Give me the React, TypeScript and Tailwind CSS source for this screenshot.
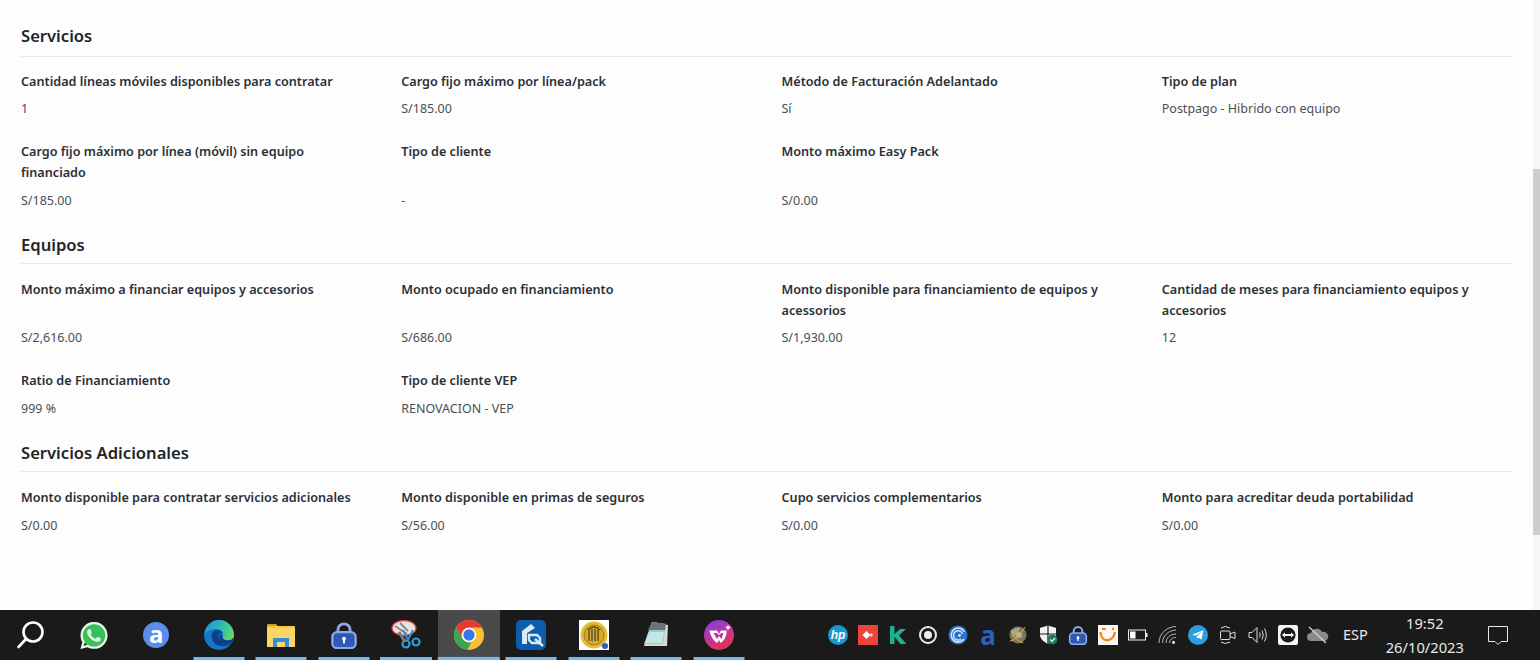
import { FaWhatsapp, FaTelegramPlane } from "react-icons/fa";

type Field = { label: string; value: string };

const servicios: Field[][] = [
  [
    { label: "Cantidad líneas móviles disponibles para contratar", value: "1" },
    { label: "Cargo fijo máximo por línea/pack", value: "S/185.00" },
    { label: "Método de Facturación Adelantado", value: "Sí" },
    { label: "Tipo de plan", value: "Postpago - Hibrido con equipo" },
  ],
  [
    { label: "Cargo fijo máximo por línea (móvil) sin equipo financiado", value: "S/185.00" },
    { label: "Tipo de cliente", value: "-" },
    { label: "Monto máximo Easy Pack", value: "S/0.00" },
  ],
];

const equipos: Field[][] = [
  [
    { label: "Monto máximo a financiar equipos y accesorios", value: "S/2,616.00" },
    { label: "Monto ocupado en financiamiento", value: "S/686.00" },
    { label: "Monto disponible para financiamiento de equipos y acessorios", value: "S/1,930.00" },
    { label: "Cantidad de meses para financiamiento equipos y accesorios", value: "12" },
  ],
  [
    { label: "Ratio de Financiamiento", value: "999 %" },
    { label: "Tipo de cliente VEP", value: "RENOVACION - VEP" },
  ],
];

const adicionales: Field[][] = [
  [
    { label: "Monto disponible para contratar servicios adicionales", value: "S/0.00" },
    { label: "Monto disponible en primas de seguros", value: "S/56.00" },
    { label: "Cupo servicios complementarios", value: "S/0.00" },
    { label: "Monto para acreditar deuda portabilidad", value: "S/0.00" },
  ],
];

function Section({ title, rows, first }: { title: string; rows: Field[][]; first?: boolean }) {
  return (
    <section className={first ? "" : "mt-[14.8px]"}>
      <h2 className={`border-b border-[#e6e8ea] text-[16.6px] leading-[24px] font-semibold text-[#212529] ${first ? "h-[33px]" : "h-[31px]"}`}>
        {title}
      </h2>
      {rows.map((row, i) => (
        <div key={i} className={`grid grid-cols-4 gap-x-[30px] ${i === 0 && !first ? "mt-[14.8px]" : "mt-[14px]"}`}>
          {row.map((f) => (
            <div key={f.label} className="flex h-full flex-col pb-[7.2px]">
              <div className="text-[12.65px] leading-[20.8px] font-semibold text-[#2b3035]">{f.label}</div>
              <div className="mt-auto pt-[7.6px] text-[12.5px] leading-[20.8px] text-[#495057]">{f.value}</div>
            </div>
          ))}
        </div>
      ))}
    </section>
  );
}

function SearchIcon() {
  return (
    <svg width="30" height="30" viewBox="0 0 30 30" fill="none" stroke="#fff" strokeWidth="2.6" strokeLinecap="round">
      <circle cx="17" cy="12" r="9.5" />
      <path d="M10 19 L2.5 27" />
    </svg>
  );
}

function Whatsapp() {
  return (
    <div className="relative flex h-[30px] w-[30px] items-center justify-center">
      <div className="absolute left-[2px] top-[2px] h-[25px] w-[26px] rounded-full bg-[#36c25a]" />
      <FaWhatsapp className="relative h-[31px] w-[31px] text-[#e9f5ec]" />
    </div>
  );
}

function AvastA() {
  return (
    <div className="flex h-[26px] w-[26px] items-center justify-center rounded-full bg-[#5b8def] font-['Noto_Sans',sans-serif] text-[24px] leading-none font-bold text-white">
      <span className="-mt-[3px]">a</span>
    </div>
  );
}

function Edge() {
  return (
    <svg width="30" height="30" viewBox="0 0 30 30">
      <defs>
        <linearGradient id="edgeTop" x1="0" y1="0.4" x2="1" y2="0.7">
          <stop offset="0" stopColor="#1a9ad8" />
          <stop offset="0.55" stopColor="#2cc0b0" />
          <stop offset="1" stopColor="#6fd85c" />
        </linearGradient>
      </defs>
      <circle cx="15" cy="15" r="15" fill="#1577c9" />
      <path d="M15 0 A15 15 0 0 1 30 15 C30 20 25 21 21 20 C19 19.5 18 18 19 16 C20 12 17 9 12 9 C8 9 4 10 0.6 14 C2 6 8 0 15 0 Z" fill="url(#edgeTop)" />
      <path d="M10 11 C6 14 7 22 13 25 C18 27.5 24 26 27.5 22.5 C23 24 17 23 15 20 C13 17 15 12 19 13 C16 9.5 12 9.5 10 11 Z" fill="#0d3f86" />
      <path d="M21 20 C25 21 30 20 30 15 A15 15 0 0 1 27.5 23 C23 24.5 17 23 15 20 C14 18 15 15 18 14 C18 17 19 19.5 21 20 Z" fill="#0d3f86" />
    </svg>
  );
}

function Folder() {
  return (
    <svg width="28" height="24" viewBox="0 0 28 24">
      <path d="M0 2 a1 1 0 0 1 1-1 h8 l3 3 v3 H0 Z" fill="#d19a1b" />
      <rect x="0" y="3" width="28" height="21" rx="1" fill="#f6c945" />
      <rect x="0" y="5" width="28" height="19" rx="1" fill="#fbd667" />
      <path d="M6 24 V15 H22 V24 H18 V19 H10 V24 Z" fill="#2f8fd8" />
    </svg>
  );
}

function LockBlue({ size }: { size: number }) {
  return (
    <svg width={size} height={size} viewBox="0 0 30 30">
      <path d="M8.5 13 V9.5 a6.5 6.5 0 0 1 13 0 V13" fill="none" stroke="#8fa9e8" strokeWidth="3" />
      <rect x="2.5" y="12" width="25" height="17" rx="5" fill="#2e59b5" stroke="#8fa9e8" strokeWidth="2.4" />
      <circle cx="15" cy="19" r="2" fill="#fff" />
      <rect x="14" y="19" width="2" height="5" fill="#fff" />
    </svg>
  );
}

function Snip() {
  return (
    <svg width="30" height="30" viewBox="0 0 30 30">
      <ellipse cx="13" cy="8" rx="12" ry="7.5" fill="#e9e4e2" stroke="#d64545" strokeWidth="1.3" />
      <path d="M4 6 L16 14 M9 3 L17 11" stroke="#8a8a8a" strokeWidth="2" />
      <path d="M12 10 L17 20 M22 10 L17 20" stroke="#2f8fd8" strokeWidth="2" />
      <circle cx="15" cy="24" r="3.5" fill="none" stroke="#2f9bd8" strokeWidth="2.2" />
      <circle cx="25" cy="22" r="3.5" fill="none" stroke="#2f9bd8" strokeWidth="2.2" />
      <path d="M8 12 L14 22" stroke="#7a7a7a" strokeWidth="3" />
    </svg>
  );
}

function Chrome() {
  return (
    <svg width="30" height="30" viewBox="0 0 30 30">
      <circle cx="15" cy="15" r="15" fill="#fbc02d" />
      <path d="M15 0 A15 15 0 0 1 28 7.5 H15 A7.5 7.5 0 0 0 8.5 18.8 L2.1 7.3 A15 15 0 0 1 15 0 Z" fill="#e53935" />
      <path d="M2.1 7.3 L8.5 18.8 A7.5 7.5 0 0 0 17.5 22.1 L13.5 29.9 A15 15 0 0 1 2.1 7.3 Z" fill="#3aa655" />
      <circle cx="15" cy="15" r="7.2" fill="#fff" />
      <circle cx="15" cy="15" r="5.7" fill="#3b78e7" />
    </svg>
  );
}

function QApp() {
  return (
    <svg width="30" height="30" viewBox="0 0 30 30">
      <rect width="30" height="30" rx="5" fill="#0d5cb0" />
      <path d="M6 24 V11 L15 4 L19 8 L11 13 V24 Z" fill="#dbe9f7" />
      <path d="M13 15 h8 l3 3 v5 h-8 l-3-3 Z" fill="none" stroke="#dbe9f7" strokeWidth="2.4" />
      <path d="M19 19 L27 26" stroke="#dbe9f7" strokeWidth="2.4" />
    </svg>
  );
}

function Seal() {
  return (
    <div className="h-[30px] w-[30px] bg-white p-[1px]">
      <svg width="28" height="28" viewBox="0 0 28 28">
        <circle cx="14" cy="14" r="13.5" fill="#e3bf35" />
        <circle cx="14" cy="14" r="10" fill="#d8a92a" stroke="#8a6a1c" strokeWidth="0.8" />
        <path d="M9 20 V9 M12 20 V8 M15 20 V8 M18 20 V9 M8 9 Q14 3 20 9" stroke="#5e4a22" strokeWidth="1.4" fill="none" />
        <circle cx="25" cy="25" r="3" fill="#2b5fc4" />
      </svg>
    </div>
  );
}

function Notepad() {
  return (
    <svg width="30" height="30" viewBox="0 0 30 30">
      <path d="M11 2 L27 5 L26 26 L3 26 Z" fill="#dcd9cf" />
      <path d="M11 2 L25 4 L22 24 L3 24 Z" fill="#8fd0d4" />
      <path d="M11 2 L25 4 L24 10 L7 10 Z" fill="#6c7570" />
      <path d="M8 12 L23 12 L21 23 L4 23 Z" fill="#c3e7e8" />
    </svg>
  );
}

function Wps() {
  return (
    <svg width="30" height="30" viewBox="0 0 30 30">
      <defs>
        <linearGradient id="wpsFill" x1="0.2" y1="0" x2="0.7" y2="1">
          <stop offset="0" stopColor="#8a3ee0" />
          <stop offset="1" stopColor="#f0304f" />
        </linearGradient>
      </defs>
      <circle cx="15" cy="15" r="15" fill="url(#wpsFill)" />
      <path d="M5.5 10.5 H13 L15 14 L17 10.5 H22.5 C23 14 21.5 18 19 21 L16.5 23 L15 20 L13 23 C9 20 6 15 5.5 10.5 Z" fill="#fff" />
      <path d="M9.5 13 L13 19 L15 16 L17.5 19 L19.5 13 L17.8 13 L15 15 L12.5 13 Z" fill="#c03098" />
      <path d="M24 4.5 l0.9 2.1 2.1 0.9 -2.1 0.9 -0.9 2.1 -0.9-2.1 -2.1-0.9 2.1-0.9 Z" fill="#fff" />
    </svg>
  );
}

function HpLogo() {
  return (
    <div className="flex h-[20px] w-[20px] items-center justify-center rounded-full bg-[#1a96d4] font-['Liberation_Sans',sans-serif] text-[12px] leading-none font-bold text-white italic">
      hp
    </div>
  );
}

function AnyDesk() {
  return (
    <svg width="20" height="20" viewBox="0 0 20 20">
      <rect width="20" height="20" fill="#ef443b" />
      <path d="M8.5 6 L12.5 10 L8.5 14 L4.5 10 Z" fill="#fff" />
      <path d="M13.2 8 L15.2 10 L13.2 12 L11.2 10 Z" fill="#fbc8c4" />
    </svg>
  );
}

function Kaspersky() {
  return (
    <svg width="20" height="20" viewBox="0 0 20 20">
      <path d="M2 1 H6.5 V9 L12 4 H18 L11 10.5 L18.5 19 H12.5 L6.5 12 V19 H2 Z" fill="#1fae8e" />
    </svg>
  );
}

function RingDot() {
  return (
    <svg width="20" height="20" viewBox="0 0 20 20">
      <circle cx="10" cy="10" r="8" fill="none" stroke="#eee" strokeWidth="2" />
      <circle cx="10" cy="10" r="4" fill="#eee" />
    </svg>
  );
}

function Spiral() {
  return (
    <svg width="20" height="20" viewBox="0 0 20 20" fill="none">
      <circle cx="10" cy="10" r="9.5" fill="#2d72c9" />
      <path d="M16.5 7 A7 7 0 1 0 16 14" stroke="#d6e8fb" strokeWidth="1.6" />
      <path d="M14.5 9 A4.6 4.6 0 1 0 13 14" stroke="#d6e8fb" strokeWidth="1.4" />
      <circle cx="11.5" cy="10.5" r="1.4" fill="#d6e8fb" />
    </svg>
  );
}

function Globe() {
  return (
    <svg width="20" height="20" viewBox="0 0 20 20" fill="none">
      <circle cx="10" cy="10" r="8.5" fill="#7c7460" />
      <path d="M3 6 Q8 2 12 3 L10 9 L5 12 Z" fill="#a8a48f" />
      <circle cx="11" cy="10" r="3" fill="#c7b07c" />
      <path d="M2 16 Q9 15 17 2" stroke="#e7b82e" strokeWidth="1" />
      <path d="M3 5 Q6 15 15 18" stroke="#e7b82e" strokeWidth="1" />
    </svg>
  );
}

function Shield() {
  return (
    <svg width="20" height="20" viewBox="0 0 20 20">
      <path d="M10 0.5 L18 3 V10 C18 14 14 17 10 19 C6 17 2 14 2 10 V3 Z" fill="#f4f4f4" />
      <path d="M10 0.5 V19 M2 9 H18" stroke="#1a1a1a" strokeWidth="1.2" />
      <circle cx="14.5" cy="14.5" r="5" fill="#14804a" />
      <path d="M12.2 14.5 L14 16.3 L17 13" fill="none" stroke="#fff" strokeWidth="1.2" />
    </svg>
  );
}

function Smile() {
  return (
    <svg width="20" height="20" viewBox="0 0 20 20" fill="none">
      <rect width="20" height="20" fill="#fdf8f2" />
      <path d="M2.5 7 C3 18 15 18 17 7" stroke="#f08a24" strokeWidth="2.4" />
      <path d="M4 4 H8" stroke="#f08a24" strokeWidth="2" />
      <circle cx="15" cy="4" r="1.2" fill="#f08a24" />
    </svg>
  );
}

function Battery() {
  return (
    <svg width="20" height="12" viewBox="0 0 20 12" fill="none">
      <rect x="0.5" y="1" width="17" height="10" stroke="#eee" />
      <rect x="2" y="2.5" width="5.5" height="7" fill="#fff" />
      <rect x="18" y="4" width="1.5" height="4" fill="#eee" />
    </svg>
  );
}

function Wifi() {
  return (
    <svg width="20" height="20" viewBox="0 0 20 20" fill="none" stroke="#bbb" strokeWidth="1">
      <path d="M1 18 C1 9 8 2 18 1.5" />
      <path d="M4.5 18 C4.5 11 10 5.5 18 5" />
      <path d="M8 18 C8 13 12 9 18 9" />
      <path d="M11.5 18 C11.5 15 14 12.5 18 12.5" />
      <circle cx="15.5" cy="17.5" r="1.4" fill="#fff" stroke="none" />
    </svg>
  );
}

function Telegram() {
  return (
    <div className="flex h-[20px] w-[20px] items-center justify-center rounded-full bg-[#2a9fdc]">
      <FaTelegramPlane className="-ml-[1px] h-[12px] w-[12px] text-white" />
    </div>
  );
}

function Camera() {
  return (
    <svg width="16" height="20" viewBox="0 0 16 20" fill="none" stroke="#ddd" strokeWidth="1">
      <path d="M1 3 Q5 0 10 3" />
      <path d="M1 17 Q5 20 10 17" />
      <rect x="0.5" y="6" width="9.5" height="8.5" rx="1" />
      <path d="M10 9 L15 7 V13.5 L10 11.5" />
    </svg>
  );
}

function Speaker() {
  return (
    <svg width="20" height="20" viewBox="0 0 20 20" fill="none" stroke="#ddd" strokeWidth="1">
      <path d="M1 7.5 H4 L9 2.5 V17.5 L4 12.5 H1 Z" />
      <path d="M11.5 7.5 Q13 10 11.5 12.5" />
      <path d="M14 5.5 Q16.5 10 14 14.5" />
      <path d="M16.5 3.5 Q20 10 16.5 16.5" />
    </svg>
  );
}

function TeamViewer() {
  return (
    <svg width="20" height="20" viewBox="0 0 20 20">
      <rect width="20" height="20" rx="2" fill="#f5f5f5" />
      <circle cx="10" cy="10" r="7.6" fill="#1a1a1a" />
      <path d="M3.8 10 L7 7.6 V9 H13 V7.6 L16.2 10 L13 12.4 V11 H7 V12.4 Z" fill="#f5f5f5" />
    </svg>
  );
}

function CloudOff() {
  return (
    <svg width="22" height="20" viewBox="0 0 22 20">
      <path d="M4 16 a4 4 0 0 1 0-8 a6 6 0 0 1 11-1 a4.5 4.5 0 0 1 3 9 Z" fill="#8a8a8a" />
      <path d="M2 2 L19 18" stroke="#d5d5d5" strokeWidth="1.2" />
    </svg>
  );
}

function Notification() {
  return (
    <svg width="22" height="21" viewBox="0 0 22 21" fill="none" stroke="#e8e8e8" strokeWidth="1">
      <path d="M1.5 1.5 H20.5 V16.5 H14 L11 19.5 L8 16.5 H1.5 Z" />
    </svg>
  );
}

const apps = [
  { key: "search", icon: <SearchIcon />, bar: "" },
  { key: "whatsapp", icon: <Whatsapp />, bar: "" },
  { key: "avast", icon: <AvastA />, bar: "" },
  { key: "edge", icon: <Edge />, bar: "w-[51px]" },
  { key: "files", icon: <Folder />, bar: "w-[51px]" },
  { key: "lock", icon: <LockBlue size={28} />, bar: "w-[51px]" },
  { key: "snip", icon: <Snip />, bar: "w-[52px]" },
  { key: "chrome", icon: <Chrome />, bar: "w-full" },
  { key: "qapp", icon: <QApp />, bar: "w-[51px]" },
  { key: "seal", icon: <Seal />, bar: "w-[51px]" },
  { key: "notepad", icon: <Notepad />, bar: "w-[51px]" },
  { key: "wps", icon: <Wps />, bar: "w-[51px]" },
];

const tray = [
  <HpLogo />,
  <AnyDesk />,
  <Kaspersky />,
  <RingDot />,
  <Spiral />,
  <span className="font-['Noto_Sans',sans-serif] text-[26px] leading-none font-bold text-[#2d5fc0]">a</span>,
  <Globe />,
  <Shield />,
  <LockBlue size={20} />,
  <Smile />,
  <Battery />,
  <Wifi />,
  <Telegram />,
  <Camera />,
  <Speaker />,
  <TeamViewer />,
  <CloudOff />,
];

function Taskbar() {
  return (
    <div className="flex h-[50px] w-full items-stretch bg-[#1a1a1a] font-['Noto_Sans',sans-serif] text-[#e8e8e8]">
      <div className="flex w-[750px] shrink-0">
        {apps.map((a) => (
          <div
            key={a.key}
            className={`relative flex w-[62.5px] items-center justify-center ${a.key === "chrome" ? "bg-[#4a4a4a]" : ""}`}
          >
            {a.icon}
            {a.bar && <div className={`absolute bottom-0 left-1/2 h-[3px] -translate-x-1/2 bg-[#76b9ed] ${a.bar}`} />}
          </div>
        ))}
      </div>
      <div className="ml-[73px] flex">
        {tray.map((t, i) => (
          <div key={i} className="flex w-[30px] items-center justify-center">
            {t}
          </div>
        ))}
      </div>
      <div className="ml-[10px] flex items-center text-[14.5px]">ESP</div>
      <div className="ml-[15px] flex w-[84px] flex-col items-center justify-center text-[14.7px] leading-[24px]">
        <span>19:52</span>
        <span>26/10/2023</span>
      </div>
      <div className="ml-[20px] flex items-center">
        <Notification />
      </div>
    </div>
  );
}

export default function App() {
  return (
    <div className="flex h-[660px] w-[1540px] flex-col overflow-hidden bg-[#fdfdfe] font-['Noto_Sans',sans-serif]">
      <div className="flex h-[610px] shrink-0">
        <main className="w-[1533px] pl-[21px] pr-[21px] pt-[24px]">
          <Section title="Servicios" rows={servicios} first />
          <Section title="Equipos" rows={equipos} />
          <Section title="Servicios Adicionales" rows={adicionales} />
        </main>
        <div className="flex w-[7px] flex-col bg-[#f6f6f8]">
          <div className="mt-[169px] h-[366px] bg-[#cdcdcd]" />
        </div>
      </div>
      <Taskbar />
    </div>
  );
}
